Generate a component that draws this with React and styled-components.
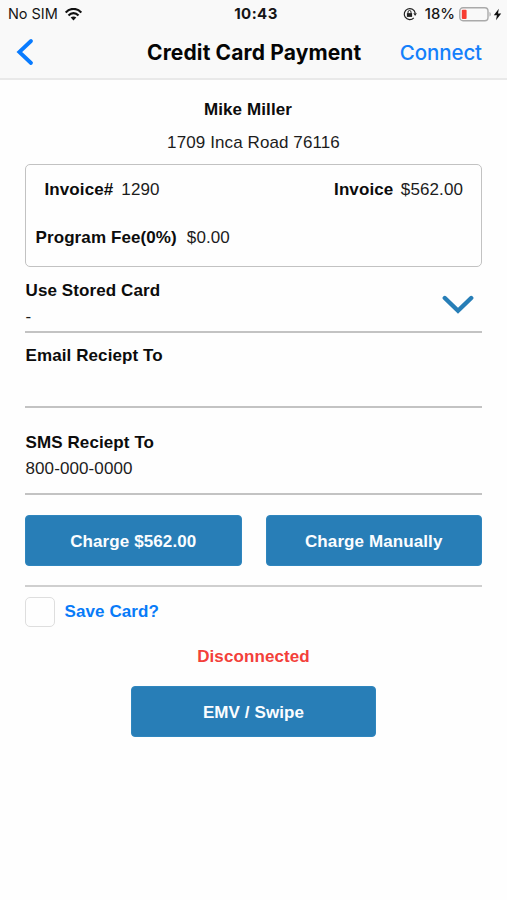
import React from "react";
import styled, { createGlobalStyle } from "styled-components";

const GlobalStyle = createGlobalStyle`
  * { box-sizing: border-box; }
  html, body { margin: 0; padding: 0; background: #fefefe; }
  svg { display: block; flex: none; }
`;

const Screen = styled.main`
  width: 507px;
  height: 900px;
  overflow: hidden;
  background: #fefefe;
  color: #0c0c0c;
  font-family: "Liberation Sans", Arial, sans-serif;
  font-size: 17px;
  line-height: 20px;
`;

const Header = styled.header`
  height: 80px;
  background: #f9f9f9;
  border-bottom: 2px solid #e9e9e9;
  font-family: Inter, sans-serif;
`;

const StatusBar = styled.div`
  display: grid;
  grid-template-columns: 1fr auto 1fr;
  align-items: center;
  height: 28px;
  padding: 0 5px 0 8px;
  color: #151515;
`;

const StatusGroup = styled.div`
  display: flex;
  align-items: center;
  justify-content: ${(p) => (p.$end ? "flex-end" : "flex-start")};
`;

const StatusText = styled.span`
  font-size: ${(p) => p.$size || 15}px;
  font-weight: ${(p) => p.$weight || 400};
  letter-spacing: ${(p) => p.$spacing || 0}px;
  margin: 0 ${(p) => p.$gap || 0}px 0 ${(p) => p.$before || 0}px;
  white-space: nowrap;
`;

const NavBar = styled.nav`
  display: grid;
  grid-template-columns: 131px 1fr auto;
  align-items: center;
  height: 48px;
  padding: 0 25px 0 16px;
`;

const BackButton = styled.button`
  justify-self: start;
  padding: 0;
  border: 0;
  background: none;
`;

const Title = styled.h1`
  margin: 1px 0 0;
  font-size: 21px;
  line-height: 28px;
  font-weight: 700;
  letter-spacing: 0.13px;
  color: #050505;
  white-space: nowrap;
`;

const ConnectButton = styled.button`
  justify-self: end;
  margin-top: 1px;
  padding: 0;
  border: 0;
  background: none;
  color: #1480fb;
  font: 500 20.5px/28px Inter, sans-serif;
  letter-spacing: -0.1px;
`;

const Content = styled.section`
  padding: 20px 25px 0;
`;

const Label = styled.span`
  font-weight: 700;
  letter-spacing: 0.1px;
  color: ${(p) => p.$color || "#0c0c0c"};
  white-space: nowrap;
`;

const Value = styled.span`
  letter-spacing: 0.1px;
  color: #1c1c1c;
  white-space: nowrap;
`;

const CenterLine = styled.div`
  display: flex;
  justify-content: center;
  height: 20px;
  margin-top: ${(p) => p.$top || 0}px;
  padding-right: ${(p) => p.$shift || 0}px;
`;

const InvoiceCard = styled.div`
  display: flex;
  flex-direction: column;
  gap: 28px;
  height: 103px;
  margin-top: 11px;
  padding: 15px 18px 0 9.5px;
  border: 1.5px solid #c2c2c2;
  border-radius: 5px;
`;

const InvoiceRow = styled.div`
  display: flex;
  justify-content: space-between;
  padding-left: ${(p) => p.$indent || 0}px;
`;

const Pair = styled.div`
  display: flex;
  gap: ${(p) => p.$gap}px;
`;

const Field = styled.div`
  display: flex;
  justify-content: space-between;
  height: ${(p) => p.$height}px;
  padding: 0 8px 0 0.5px;
  border-bottom: 2px solid #c3c3c3;
`;

const FieldText = styled.div`
  display: flex;
  flex-direction: column;
  gap: 6px;
  padding-top: ${(p) => p.$top}px;
`;

const DropdownButton = styled.button`
  align-self: flex-start;
  margin-top: 28px;
  padding: 0;
  border: 0;
  background: none;
`;

const Actions = styled.div`
  display: grid;
  grid-template-columns: 1fr 1fr;
  gap: 24px;
  height: 92px;
  padding-top: 20px;
  border-bottom: 2px solid #cfcfcf;
`;

const ActionButton = styled.button`
  width: ${(p) => p.$width || "100%"};
  height: 51px;
  padding: 2px 0 0;
  border: 1px solid #2f86be;
  border-radius: 4px;
  background: #287eb7;
  color: #fbfdff;
  font: 700 17px/20px "Liberation Sans", Arial, sans-serif;
  letter-spacing: 0.1px;
`;

const SaveRow = styled.label`
  display: flex;
  align-items: center;
  gap: 9.5px;
  height: 30px;
  margin-top: 10px;
`;

const Checkbox = styled.span`
  width: 30px;
  height: 30px;
  border: 1.5px solid #dedede;
  border-radius: 5px;
`;

const ReaderAction = styled.div`
  display: flex;
  justify-content: center;
  margin-top: 19px;
`;

const WifiIcon = () => (
  <svg width="17" height="13" viewBox="0 0 17 13" fill="none" stroke="#111" strokeWidth="2.2">
    <path d="M.8 4.6C5-.3 12-.3 16.2 4.6" />
    <path d="M3.5 7.4c2.9-3 7.1-3 10 0" />
    <path d="M8.5 12.4 5.7 9.5c1.6-1.4 4-1.4 5.6 0z" fill="#111" stroke="none" />
  </svg>
);

const RotationLockIcon = () => (
  <svg width="14" height="14" viewBox="0 0 14 14" fill="none" stroke="#222">
    <path d="M10.8 10.8A5.5 5.5 0 1 1 12.2 6.2" strokeWidth="1.2" />
    <path d="M10.3 6.2h3.6l-1.8 2.7z" fill="#222" stroke="none" />
    <path d="M3.9 6.1h5.2v3.8H3.9z" fill="#222" stroke="none" />
    <path d="M5 6.4V5a1.5 1.5 0 0 1 3 0v1.4" strokeWidth="1" />
  </svg>
);

const BatteryIcon = () => (
  <svg width="34" height="15" viewBox="0 0 34 15" fill="none">
    <rect x=".8" y=".8" width="28.2" height="13" rx="3.2" stroke="#aaa" strokeWidth="1.4" />
    <rect x="2.8" y="2.7" width="4.8" height="9.2" rx="1" fill="#f73c32" />
    <path d="M30.5 5v4.6c1.7-.6 1.7-4 0-4.6z" fill="#a5a5a5" />
  </svg>
);

const BoltIcon = () => (
  <svg width="9" height="13" viewBox="0 0 8 13">
    <path d="M5.3.7.3 7.2h3.1L2.5 12.3 7.7 5.5H4.5z" fill="#111" />
  </svg>
);

const BackIcon = () => (
  <svg width="18" height="28" viewBox="0 0 18 28" fill="none">
    <path d="M15 3 3.3 14 15 25" stroke="#087bff" strokeWidth="3.8" strokeLinecap="round" />
  </svg>
);

const ChevronIcon = () => (
  <svg width="32" height="20" viewBox="0 0 32 20" fill="none">
    <path d="M2.8 3 16 15.8 29.2 3" stroke="#277eb7" strokeWidth="4.4" strokeLinecap="round" />
  </svg>
);

export default function App() {
  return (
    <Screen>
      <GlobalStyle />
      <Header>
        <StatusBar>
          <StatusGroup>
            <StatusText $size={14.5} $gap={7} $spacing={-0.05}>No SIM</StatusText>
            <WifiIcon />
          </StatusGroup>
          <StatusText $weight={700} $spacing={0.45} $before={2}>10:43</StatusText>
          <StatusGroup $end>
            <RotationLockIcon />
            <StatusText $weight={500} $size={14.8} $before={8} $gap={4}>18%</StatusText>
            <BatteryIcon />
            <BoltIcon />
          </StatusGroup>
        </StatusBar>
        <NavBar>
          <BackButton aria-label="Back"><BackIcon /></BackButton>
          <Title>Credit Card Payment</Title>
          <ConnectButton>Connect</ConnectButton>
        </NavBar>
      </Header>
      <Content>
        <CenterLine $shift={11}><Label>Mike Miller</Label></CenterLine>
        <CenterLine $top={13}><Value>1709 Inca Road 76116</Value></CenterLine>
        <InvoiceCard>
          <InvoiceRow $indent={9}>
            <Pair $gap={8}><Label>Invoice#</Label><Value>1290</Value></Pair>
            <Pair $gap={7.5}><Label>Invoice</Label><Value>$562.00</Value></Pair>
          </InvoiceRow>
          <InvoiceRow>
            <Pair $gap={10}><Label>Program Fee(0%)</Label><Value>$0.00</Value></Pair>
          </InvoiceRow>
        </InvoiceCard>
        <Field $height={66}>
          <FieldText $top={14}><Label>Use Stored Card</Label><Value>-</Value></FieldText>
          <DropdownButton aria-label="Choose stored card"><ChevronIcon /></DropdownButton>
        </Field>
        <Field $height={75}>
          <FieldText $top={13}><Label>Email Reciept To</Label></FieldText>
        </Field>
        <Field $height={87}>
          <FieldText $top={25}><Label>SMS Reciept To</Label><Value>800-000-0000</Value></FieldText>
        </Field>
        <Actions>
          <ActionButton>Charge $562.00</ActionButton>
          <ActionButton>Charge Manually</ActionButton>
        </Actions>
        <SaveRow><Checkbox /><Label $color="#087bf8">Save Card?</Label></SaveRow>
        <CenterLine $top={20}><Label $color="#f3403a">Disconnected</Label></CenterLine>
        <ReaderAction><ActionButton $width="245px">EMV / Swipe</ActionButton></ReaderAction>
      </Content>
    </Screen>
  );
}
